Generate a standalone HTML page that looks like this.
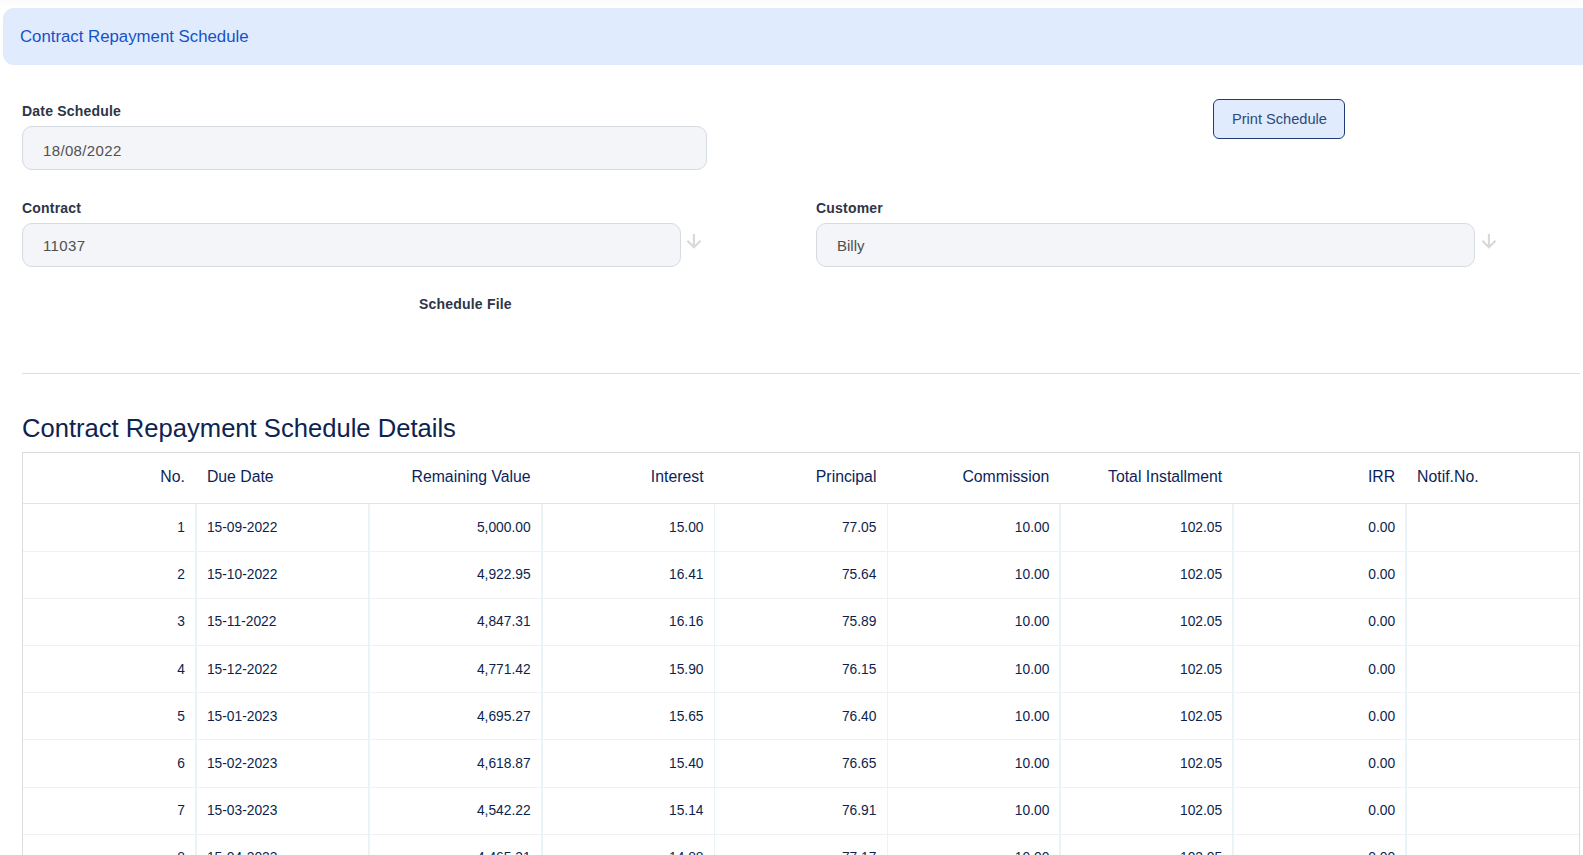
<!DOCTYPE html>
<html><head><meta charset="utf-8">
<style>
*{box-sizing:border-box;margin:0;padding:0}
html,body{width:1583px;height:855px;overflow:hidden;background:#fff;font-family:"Liberation Sans",sans-serif}
body{position:relative}
.topstrip{position:absolute;left:0;top:0;width:1583px;height:3px;background:#fcfcfc}
.topstrip2{position:absolute;left:0;top:3px;width:1583px;height:4px;background:#fefefe}
.banner{position:absolute;left:3px;top:8px;width:1600px;height:57px;background:#e0ebfd;border-radius:11px 0 0 11px}
.banner span{position:absolute;left:17px;top:19px;font-size:16.8px;line-height:20px;color:#1552c8;white-space:nowrap}
.lbl{position:absolute;font-weight:bold;font-size:14px;line-height:16px;color:#2d3546;letter-spacing:0.2px;white-space:nowrap}
.inp{position:absolute;height:44px;background:#f3f5f9;border:1px solid #d6dae1;border-radius:10px}
.inp span{position:absolute;left:20px;top:16px;font-size:15px;line-height:16px;letter-spacing:0.35px;color:#505050;white-space:nowrap}
.arrow{position:absolute;width:16px;height:16px}
.btn{position:absolute;left:1213px;top:99px;width:132px;height:40px;background:#e0ebfd;border:1px solid #1f3d73;border-radius:6px}
.btn span{position:absolute;left:18px;top:11px;font-size:14.6px;line-height:16px;color:#2b4a7c;white-space:nowrap}
.hr{position:absolute;left:22px;top:373px;width:1558px;height:1px;background:#d9e0e3}
.h2{position:absolute;left:22px;top:413px;font-size:25.6px;line-height:30px;color:#0e2350;white-space:nowrap}
.tbl{position:absolute;left:22px;top:452px;width:1558px;height:420px;border:1px solid #dcdcdc}
.hline{position:absolute;left:23px;top:503px;width:1556px;height:1px;background:#dde5e9}
.hc{position:absolute;top:467px;height:20px;font-size:15.8px;line-height:20px;color:#0c1f5a;white-space:nowrap;padding:0 11px}
.dc{position:absolute;height:47.17px;font-size:13.8px;line-height:47.17px;color:#0d1f4d;white-space:nowrap;padding:0 11px}
.r{text-align:right}.l{text-align:left}
.rl{position:absolute;left:23px;width:1556px;height:1px;background:#f0f0f0}
.cs{position:absolute;top:504px;height:360px;width:1.8px;background:#eaf3f7}
</style></head><body>
<div class="topstrip"></div><div class="topstrip2"></div>
<div class="banner"><span>Contract Repayment Schedule</span></div>

<div class="lbl" style="left:22px;top:103px">Date Schedule</div>
<div class="inp" style="left:22px;top:126px;width:685px"><span>18/08/2022</span></div>
<div class="btn"><span>Print Schedule</span></div>

<div class="lbl" style="left:22px;top:200px">Contract</div>
<div class="inp" style="left:22px;top:223px;width:659px"><span style="top:14px">11037</span></div>
<svg class="arrow" style="left:686px;top:233.4px" viewBox="0 0 16 16"><path d="M7.9 1V14.3M1.3 7.7L7.9 14.2L14.5 7.7" fill="none" stroke="#d8d8d8" stroke-width="2.1"/></svg>

<div class="lbl" style="left:816px;top:200px">Customer</div>
<div class="inp" style="left:816px;top:223px;width:659px"><span style="top:14px;letter-spacing:0">Billy</span></div>
<svg class="arrow" style="left:1480.5px;top:233.4px" viewBox="0 0 16 16"><path d="M7.9 1V14.3M1.3 7.7L7.9 14.2L14.5 7.7" fill="none" stroke="#d8d8d8" stroke-width="2.1"/></svg>

<div class="lbl" style="left:419px;top:296px">Schedule File</div>

<div class="hr"></div>
<div class="h2">Contract Repayment Schedule Details</div>

<div class="tbl"></div>
<div class="hline"></div>
<div class="hc r" style="left:23.00px;width:172.89px">No.</div>
<div class="hc l" style="left:195.89px;width:172.89px">Due Date</div>
<div class="hc r" style="left:368.78px;width:172.89px">Remaining Value</div>
<div class="hc r" style="left:541.67px;width:172.89px">Interest</div>
<div class="hc r" style="left:714.56px;width:172.89px">Principal</div>
<div class="hc r" style="left:887.44px;width:172.89px">Commission</div>
<div class="hc r" style="left:1060.33px;width:172.89px">Total Installment</div>
<div class="hc r" style="left:1233.22px;width:172.89px">IRR</div>
<div class="hc l" style="left:1406.11px;width:172.89px">Notif.No.</div>
<div class="rl" style="top:551px"></div>
<div class="rl" style="top:598px"></div>
<div class="rl" style="top:645px"></div>
<div class="rl" style="top:692px"></div>
<div class="rl" style="top:739px"></div>
<div class="rl" style="top:787px"></div>
<div class="rl" style="top:834px"></div>
<div class="cs" style="left:194.99px"></div>
<div class="cs" style="left:367.88px"></div>
<div class="cs" style="left:540.77px"></div>
<div class="cs" style="left:713.66px"></div>
<div class="cs" style="left:886.54px"></div>
<div class="cs" style="left:1059.43px"></div>
<div class="cs" style="left:1232.32px"></div>
<div class="cs" style="left:1405.21px"></div>
<div class="dc r" style="left:23.00px;width:172.89px;top:504.00px">1</div>
<div class="dc l" style="left:195.89px;width:172.89px;top:504.00px">15-09-2022</div>
<div class="dc r" style="left:368.78px;width:172.89px;top:504.00px">5,000.00</div>
<div class="dc r" style="left:541.67px;width:172.89px;top:504.00px">15.00</div>
<div class="dc r" style="left:714.56px;width:172.89px;top:504.00px">77.05</div>
<div class="dc r" style="left:887.44px;width:172.89px;top:504.00px">10.00</div>
<div class="dc r" style="left:1060.33px;width:172.89px;top:504.00px">102.05</div>
<div class="dc r" style="left:1233.22px;width:172.89px;top:504.00px">0.00</div>
<div class="dc r" style="left:23.00px;width:172.89px;top:551.17px">2</div>
<div class="dc l" style="left:195.89px;width:172.89px;top:551.17px">15-10-2022</div>
<div class="dc r" style="left:368.78px;width:172.89px;top:551.17px">4,922.95</div>
<div class="dc r" style="left:541.67px;width:172.89px;top:551.17px">16.41</div>
<div class="dc r" style="left:714.56px;width:172.89px;top:551.17px">75.64</div>
<div class="dc r" style="left:887.44px;width:172.89px;top:551.17px">10.00</div>
<div class="dc r" style="left:1060.33px;width:172.89px;top:551.17px">102.05</div>
<div class="dc r" style="left:1233.22px;width:172.89px;top:551.17px">0.00</div>
<div class="dc r" style="left:23.00px;width:172.89px;top:598.34px">3</div>
<div class="dc l" style="left:195.89px;width:172.89px;top:598.34px">15-11-2022</div>
<div class="dc r" style="left:368.78px;width:172.89px;top:598.34px">4,847.31</div>
<div class="dc r" style="left:541.67px;width:172.89px;top:598.34px">16.16</div>
<div class="dc r" style="left:714.56px;width:172.89px;top:598.34px">75.89</div>
<div class="dc r" style="left:887.44px;width:172.89px;top:598.34px">10.00</div>
<div class="dc r" style="left:1060.33px;width:172.89px;top:598.34px">102.05</div>
<div class="dc r" style="left:1233.22px;width:172.89px;top:598.34px">0.00</div>
<div class="dc r" style="left:23.00px;width:172.89px;top:645.51px">4</div>
<div class="dc l" style="left:195.89px;width:172.89px;top:645.51px">15-12-2022</div>
<div class="dc r" style="left:368.78px;width:172.89px;top:645.51px">4,771.42</div>
<div class="dc r" style="left:541.67px;width:172.89px;top:645.51px">15.90</div>
<div class="dc r" style="left:714.56px;width:172.89px;top:645.51px">76.15</div>
<div class="dc r" style="left:887.44px;width:172.89px;top:645.51px">10.00</div>
<div class="dc r" style="left:1060.33px;width:172.89px;top:645.51px">102.05</div>
<div class="dc r" style="left:1233.22px;width:172.89px;top:645.51px">0.00</div>
<div class="dc r" style="left:23.00px;width:172.89px;top:692.68px">5</div>
<div class="dc l" style="left:195.89px;width:172.89px;top:692.68px">15-01-2023</div>
<div class="dc r" style="left:368.78px;width:172.89px;top:692.68px">4,695.27</div>
<div class="dc r" style="left:541.67px;width:172.89px;top:692.68px">15.65</div>
<div class="dc r" style="left:714.56px;width:172.89px;top:692.68px">76.40</div>
<div class="dc r" style="left:887.44px;width:172.89px;top:692.68px">10.00</div>
<div class="dc r" style="left:1060.33px;width:172.89px;top:692.68px">102.05</div>
<div class="dc r" style="left:1233.22px;width:172.89px;top:692.68px">0.00</div>
<div class="dc r" style="left:23.00px;width:172.89px;top:739.85px">6</div>
<div class="dc l" style="left:195.89px;width:172.89px;top:739.85px">15-02-2023</div>
<div class="dc r" style="left:368.78px;width:172.89px;top:739.85px">4,618.87</div>
<div class="dc r" style="left:541.67px;width:172.89px;top:739.85px">15.40</div>
<div class="dc r" style="left:714.56px;width:172.89px;top:739.85px">76.65</div>
<div class="dc r" style="left:887.44px;width:172.89px;top:739.85px">10.00</div>
<div class="dc r" style="left:1060.33px;width:172.89px;top:739.85px">102.05</div>
<div class="dc r" style="left:1233.22px;width:172.89px;top:739.85px">0.00</div>
<div class="dc r" style="left:23.00px;width:172.89px;top:787.02px">7</div>
<div class="dc l" style="left:195.89px;width:172.89px;top:787.02px">15-03-2023</div>
<div class="dc r" style="left:368.78px;width:172.89px;top:787.02px">4,542.22</div>
<div class="dc r" style="left:541.67px;width:172.89px;top:787.02px">15.14</div>
<div class="dc r" style="left:714.56px;width:172.89px;top:787.02px">76.91</div>
<div class="dc r" style="left:887.44px;width:172.89px;top:787.02px">10.00</div>
<div class="dc r" style="left:1060.33px;width:172.89px;top:787.02px">102.05</div>
<div class="dc r" style="left:1233.22px;width:172.89px;top:787.02px">0.00</div>
<div class="dc r" style="left:23.00px;width:172.89px;top:834.19px">8</div>
<div class="dc l" style="left:195.89px;width:172.89px;top:834.19px">15-04-2023</div>
<div class="dc r" style="left:368.78px;width:172.89px;top:834.19px">4,465.31</div>
<div class="dc r" style="left:541.67px;width:172.89px;top:834.19px">14.88</div>
<div class="dc r" style="left:714.56px;width:172.89px;top:834.19px">77.17</div>
<div class="dc r" style="left:887.44px;width:172.89px;top:834.19px">10.00</div>
<div class="dc r" style="left:1060.33px;width:172.89px;top:834.19px">102.05</div>
<div class="dc r" style="left:1233.22px;width:172.89px;top:834.19px">0.00</div>
</body></html>
